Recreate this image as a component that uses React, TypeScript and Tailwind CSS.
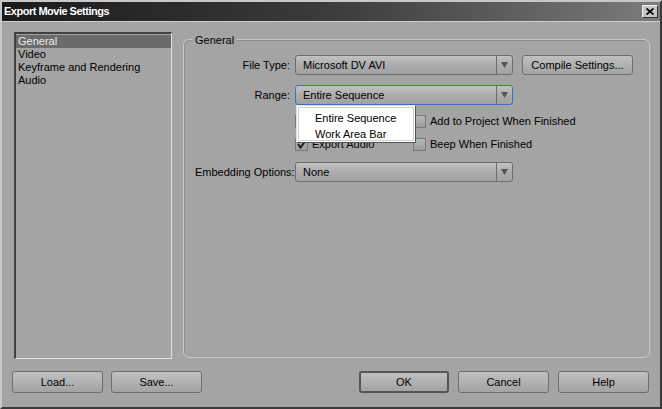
import React from "react";

const font = { fontFamily: '"Liberation Sans", Arial, sans-serif' };

function Dropdown({ value, focused = false }: { value: string; focused?: boolean }) {
  return (
    <div
      className={`flex h-[20px] w-[218px] items-stretch rounded-[3px] border bg-gradient-to-b from-[#c2c2c2] via-[#acacac] to-[#a2a2a2] ${
        focused ? "border-[#3d6fc4]" : "border-[#6c6c6c]"
      }`}
    >
      <div className="flex flex-1 items-center pl-[7px] text-[11px] text-black">{value}</div>
      <div className="flex w-[16px] items-center justify-center border-l border-[#6c6c6c]">
        <svg width="7" height="6" viewBox="0 0 7 6">
          <path d="M0 0 H7 L3.5 6 Z" fill="#555" />
        </svg>
      </div>
    </div>
  );
}

function Button({ label, width, isDefault = false }: { label: string; width: string; isDefault?: boolean }) {
  return (
    <div
      className={`flex h-[22px] items-center justify-center rounded-[3px] bg-gradient-to-b from-[#c0c0c0] to-[#a3a3a3] text-[11px] text-black ${width} ${
        isDefault ? "border-2 border-[#555]" : "border border-[#6e6e6e]"
      }`}
    >
      {label}
    </div>
  );
}

function Check({ label, checked = false }: { label: string; checked?: boolean }) {
  return (
    <div className="flex h-[13px] items-center gap-[4px] text-[11px] leading-[13px] whitespace-nowrap text-black">
      <div className="flex h-[13px] w-[13px] items-center justify-center border border-[#777] bg-gradient-to-b from-[#b8b8b8] to-[#9c9c9c]">
        {checked && (
          <svg width="9" height="8" viewBox="0 0 9 8">
            <path d="M1 3 L3.5 6.5 L8 0.5" stroke="#1a1a1a" strokeWidth="2" fill="none" />
          </svg>
        )}
      </div>
      <span>{label}</span>
    </div>
  );
}

export default function App() {
  const items = ["General", "Video", "Keyframe and Rendering", "Audio"];

  return (
    <div
      className="flex h-[409px] w-[662px] flex-col border-2 border-t-[#c8c8c8] border-l-[#c8c8c8] border-r-[#3a3a3a] border-b-[#3a3a3a] bg-[#a4a4a4]"
      style={font}
    >
      {/* title bar */}
      <div className="flex h-[19px] items-center justify-between bg-gradient-to-r from-[#1a1a1a] via-[#3c3c3c] to-[#7c7c7c] px-[2px]">
        <span className="text-[11px] font-bold tracking-[-0.5px] text-white">Export Movie Settings</span>
        <div className="flex h-[13px] w-[16px] items-center justify-center border border-t-[#eee] border-l-[#eee] border-r-[#333] border-b-[#333] bg-[#c6c6c6]">
          <svg width="8" height="7" viewBox="0 0 8 7">
            <path d="M0.5 0.5 L7.5 6.5 M7.5 0.5 L0.5 6.5" stroke="#000" strokeWidth="1.7" />
          </svg>
        </div>
      </div>
      <div className="h-px bg-[#cfcfcf]" />

      {/* body */}
      <div className="flex flex-1 flex-col px-[10px] pt-[10px]">
        <div className="flex gap-[11px] pl-[2px]">
          <div className="h-[327px] w-[158px] border-t-2 border-l-2 border-r border-b border-t-[#404040] border-l-[#404040] border-r-[#e2e2e2] border-b-[#e2e2e2] pt-px">
            {items.map((it, i) => (
              <div
                key={it}
                className={`h-[13px] pl-[2px] text-[11px] leading-[13px] ${
                  i === 0 ? "bg-[#6b6b6b] text-[#eeeeee]" : "text-black"
                }`}
              >
                {it}
              </div>
            ))}
          </div>

          <div className="relative mt-[7px] h-[319px] w-[467px] rounded-[6px] border border-[#c8c8c8] shadow-[inset_1px_1px_0_#8e8e8e]">
            <span className="absolute -top-[8px] left-[8px] bg-[#a4a4a4] px-[3px] text-[11px] text-black">General</span>

            <div className="flex flex-col pl-[11px] pt-[15px]">
              <div className="flex items-center gap-[5px]">
                <div className="w-[95px] text-right text-[11px] whitespace-nowrap text-black">File Type:</div>
                <Dropdown value="Microsoft DV AVI" />
                <div className="ml-[4px] flex h-[20px] w-[111px] items-center justify-center rounded-[3px] border border-[#6e6e6e] bg-gradient-to-b from-[#c0c0c0] to-[#a3a3a3] text-[11px] text-black">
                  Compile Settings...
                </div>
              </div>

              <div className="relative mt-[10px] flex items-center gap-[5px]">
                <div className="w-[95px] text-right text-[11px] whitespace-nowrap text-black">Range:</div>
                <Dropdown value="Entire Sequence" focused />
                {/* open popup */}
                <div className="absolute left-[101px] top-[20px] z-10 h-[38px] w-[120px] border border-t-[#e0e0e0] border-l-[#e0e0e0] border-r-[#555] border-b-[#555] bg-white p-px">
                  <div className="h-full border border-[#d0d0d0] pl-[16px] pt-[2px] text-[11px] leading-[16px] text-black">
                    <div>Entire Sequence</div>
                    <div>Work Area Bar</div>
                  </div>
                </div>
              </div>

              <div className="ml-[100px] mt-[10px] flex flex-col gap-[10px]">
                <div className="flex">
                  <div className="w-[118px]">
                    <Check label="Export Video" checked />
                  </div>
                  <Check label="Add to Project When Finished" />
                </div>
                <div className="flex">
                  <div className="w-[118px]">
                    <Check label="Export Audio" checked />
                  </div>
                  <Check label="Beep When Finished" />
                </div>
              </div>

              <div className="mt-[11px] flex items-center gap-[5px]">
                <div className="w-[95px] text-right text-[11px] whitespace-nowrap text-black">Embedding Options:</div>
                <Dropdown value="None" />
              </div>
            </div>
          </div>
        </div>

        {/* bottom buttons */}
        <div className="mt-[12px] flex items-center">
          <Button label="Load..." width="w-[91px]" />
          <div className="ml-[8px]">
            <Button label="Save..." width="w-[91px]" />
          </div>
          <div className="ml-auto flex gap-[9px] pr-[1px]">
            <Button label="OK" width="w-[90px]" isDefault />
            <Button label="Cancel" width="w-[91px]" />
            <Button label="Help" width="w-[91px]" />
          </div>
        </div>
      </div>
    </div>
  );
}
